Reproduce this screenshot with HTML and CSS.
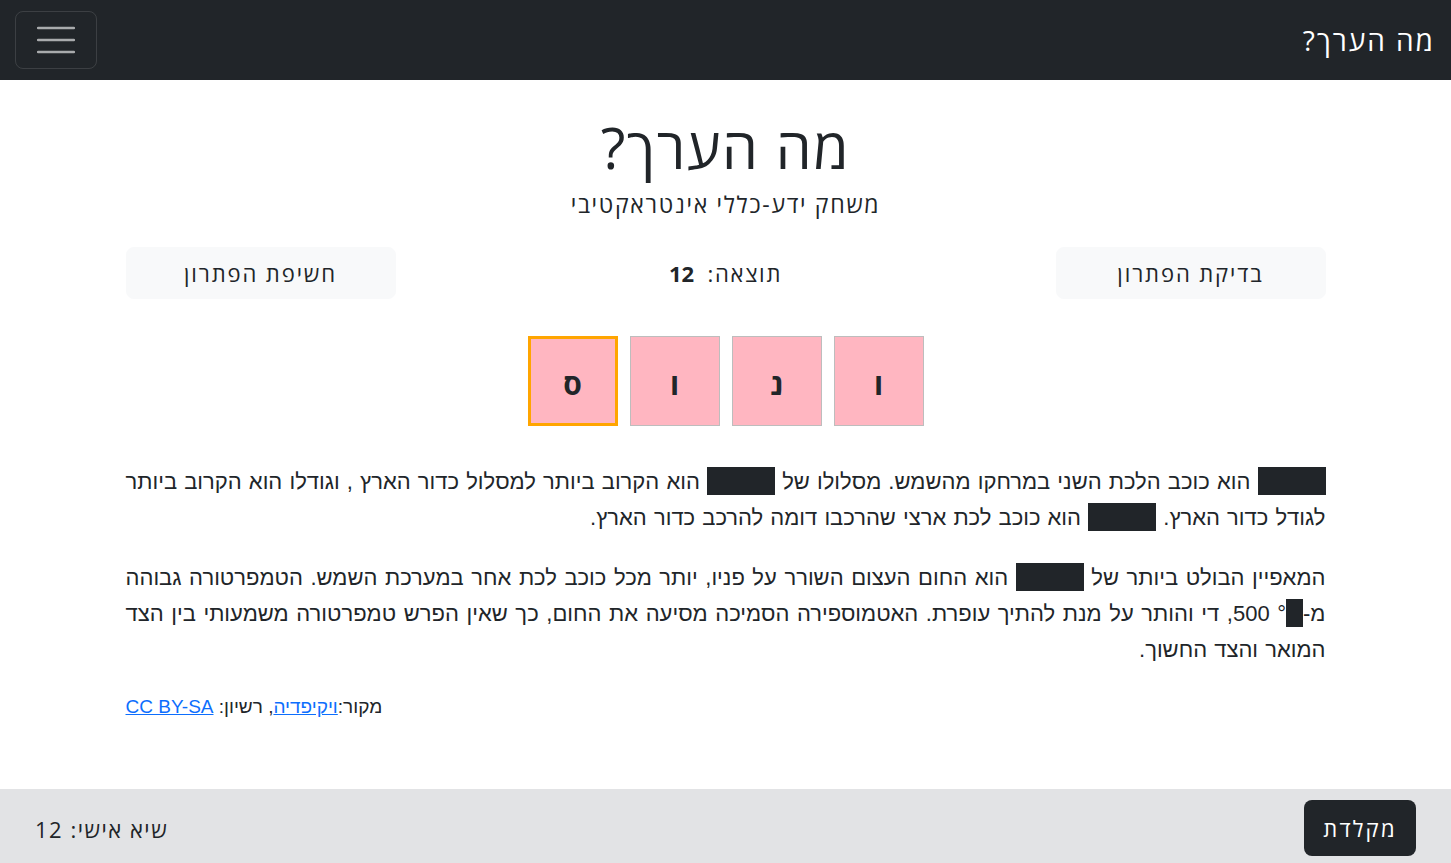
FILE: index.html
```html
<!DOCTYPE html>
<html lang="he" dir="rtl">
<head>
<meta charset="utf-8">
<title>מה הערך?</title>
<link rel="stylesheet" href="styles.css">
</head>
<body>
<nav class="navbar">
  <a class="brand" href="#">מה הערך?</a>
  <button class="toggler" type="button" aria-label="תפריט">
    <svg width="38" height="28" viewBox="0 0 38 28"><path d="M1 2h36M1 14h36M1 26h36" stroke="#a9abad" stroke-width="2.4" stroke-linecap="round" fill="none"/></svg>
  </button>
</nav>
<main class="container">
  <h1 class="title">מה הערך?</h1>
  <p class="subtitle">משחק ידע-כללי אינטראקטיבי</p>
  <div class="controls">
    <button class="btn-light">בדיקת הפתרון</button>
    <div class="score">תוצאה: <b>12</b></div>
    <button class="btn-light">חשיפת הפתרון</button>
  </div>
  <div class="tiles">
    <div class="tile">ו</div>
    <div class="tile">נ</div>
    <div class="tile">ו</div>
    <div class="tile active">ס</div>
  </div>
  <div class="text">
    <p><span class="blank"></span> הוא כוכב הלכת השני במרחקו מהשמש. מסלולו של <span class="blank"></span> הוא הקרוב ביותר למסלול כדור הארץ , וגודלו הוא הקרוב ביותר לגודל כדור הארץ. <span class="blank"></span> הוא כוכב לכת ארצי שהרכבו דומה להרכב כדור הארץ.</p>
    <p>המאפיין הבולט ביותר של <span class="blank"></span> הוא החום העצום השורר על פניו, יותר מכל כוכב לכת אחר במערכת השמש. הטמפרטורה גבוהה מ-<span class="blank small"></span>° 500, די והותר על מנת להתיך עופרת. האטמוספירה הסמיכה מסיעה את החום, כך שאין הפרש טמפרטורה משמעותי בין הצד המואר והצד החשוך.</p>
    <p class="source">מקור:<a href="#">ויקיפדיה</a>, רשיון: <a href="#">CC BY-SA</a></p>
  </div>
</main>
<footer class="footer">
  <button class="btn-dark">מקלדת</button>
  <div class="record">שיא אישי: 12</div>
</footer>
</body>
</html>
```
FILE: styles.css
```css
* { box-sizing: border-box; }
html, body { margin: 0; padding: 0; }
body {
  font-family: "Open Sans", "Noto Sans", "Liberation Sans", sans-serif;
  color: #212529;
  background: #fff;
  min-height: 863px;
  display: flex;
  flex-direction: column;
}
.navbar {
  height: 80px;
  background: #212529;
  display: flex;
  align-items: center;
  justify-content: space-between;
  padding: 0 16px 0 15px;
}
.brand {
  color: #fff;
  text-decoration: none;
  font-size: 28px;
  letter-spacing: 2px;
  line-height: 1;
}
.toggler {
  width: 82px;
  height: 58px;
  background: transparent;
  border: 1px solid rgba(255,255,255,.12);
  border-radius: 8px;
  display: flex;
  align-items: center;
  justify-content: center;
  padding: 0;
}
.container {
  width: 1200px;
  margin: 0 auto;
  flex: 1;
}
.title {
  font-size: 57px;
  font-weight: 400;
  letter-spacing: 1.6px;
  line-height: 1.2;
  text-align: center;
  margin: 33px 0 0;
}
.subtitle {
  font-size: 23px;
  letter-spacing: 1.7px;
  text-align: center;
  margin: 7px 0 0;
  line-height: 1.4;
}
.controls {
  display: flex;
  align-items: center;
  justify-content: space-between;
  margin-top: 26px;
}
.btn-light {
  width: 270px;
  height: 52px;
  background: #f8f9fa;
  border: 1px solid #f8f9fa;
  border-radius: 8px;
  font-family: inherit;
  font-size: 22px;
  letter-spacing: 1.9px;
  color: #212529;
}
.score {
  font-size: 22px;
  letter-spacing: 1.7px;
}
.score b { font-weight: 700; margin-right: 6px; letter-spacing: 0; }
.tiles {
  display: flex;
  justify-content: center;
  gap: 12px;
  margin-top: 37px;
}
.tile {
  width: 90px;
  height: 90px;
  background: #ffb6c1;
  border: 1px solid #bdbdbd;
  display: flex;
  align-items: center;
  justify-content: center;
  padding-top: 6px;
  font-size: 30px;
  font-weight: 700;
}
.tile.active { border: 3px solid #ffa500; }
.text {
  margin-top: 38px;
  font-family: "Liberation Sans", Arial, sans-serif;
  font-size: 22px;
  word-spacing: 1px;
  line-height: 36px;
}
.text p { margin: 0 0 24px; text-align: justify; }
.blank {
  display: inline-block;
  width: 68px;
  height: 28px;
  background: #212529;
  vertical-align: -6px;
}
.blank.small { width: 17px; }
.text .source {
  font-size: 19px;
  word-spacing: 0;
  text-align: left;
  margin-top: 27px;
  line-height: 24px;
}
.source a { color: #0d6efd; }
.footer {
  height: 74px;
  background: #e2e3e5;
  display: flex;
  align-items: center;
  justify-content: space-between;
  padding: 4px 35px 0 35px;
}
.btn-dark {
  width: 112px;
  height: 56px;
  background: #212529;
  color: #fff;
  border: 0;
  border-radius: 8px;
  font-family: inherit;
  font-size: 22px;
  letter-spacing: 2.2px;
}
.record { font-size: 22px; letter-spacing: 1.5px; padding-top: 2px; }
```
